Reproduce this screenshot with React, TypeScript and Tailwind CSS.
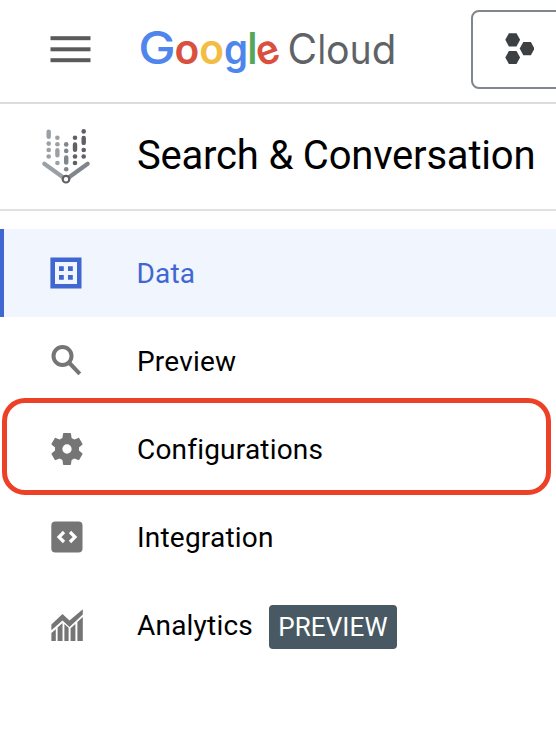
import type { ReactNode } from "react";

const GREY = "#757575";

function MenuIcon() {
  return (
    <svg width="42" height="30" viewBox="0 0 42 30" className="block shrink-0">
      <g fill="#5a5a5a">
        <rect x="0.5" y="1.2" width="40" height="4" />
        <rect x="0.5" y="12.3" width="40" height="4" />
        <rect x="0.5" y="23.2" width="40" height="4" />
      </g>
    </svg>
  );
}

type Letter = { ch: string; x: number; w: number; color: string; size: number; weight: number; transform?: string };

const letters: Letter[] = [
  { ch: "G", x: -1.8, w: 37.4, color: "#4f86ec", size: 45.5, weight: 500 },
  { ch: "o", x: 34.4, w: 24.8, color: "#d9503f", size: 41, weight: 600 },
  { ch: "o", x: 59.2, w: 24.8, color: "#f2bd42", size: 41, weight: 600 },
  { ch: "g", x: 84, w: 24, color: "#4f86ec", size: 41, weight: 600 },
  { ch: "l", x: 107.6, w: 9.8, color: "#58a55c", size: 43.5, weight: 600 },
  { ch: "e", x: 116.2, w: 23, color: "#d9503f", size: 41, weight: 600, transform: "rotate(-20 127.6 28.6)" },
  { ch: "C", x: 147.6, w: 29.6, color: "#5f6368", size: 42, weight: 400 },
  { ch: "l", x: 177.4, w: 8.6, color: "#5f6368", size: 40.5, weight: 400 },
  { ch: "o", x: 186, w: 23.6, color: "#5f6368", size: 40.5, weight: 400 },
  { ch: "u", x: 209.8, w: 21.8, color: "#5f6368", size: 40.5, weight: 400 },
  { ch: "d", x: 231.8, w: 24.6, color: "#5f6368", size: 40.5, weight: 400 },
];

function GoogleCloudLogo() {
  return (
    <svg width="260" height="56" viewBox="0 0 260 56" className="block shrink-0 overflow-visible font-['Inter',sans-serif]">
      {letters.map((l, i) => (
        <text key={i} x={l.x} y="39.9" fill={l.color} fontSize={l.size} fontWeight={l.weight} textLength={l.w} lengthAdjust="spacingAndGlyphs" transform={l.transform}>
          {l.ch}
        </text>
      ))}
    </svg>
  );
}

function ProjectIcon() {
  const hex = "-7.4,0 -3.8,-6.6 3.8,-6.6 7.4,0 3.8,6.6 -3.8,6.6";
  return (
    <svg width="30" height="33" viewBox="0 0 30 33" className="block" fill="#3c4043">
      <polygon points={hex} transform="translate(8.7 6.8)" />
      <polygon points={hex} transform="translate(23.1 15.6)" />
      <polygon points={hex} transform="translate(8.7 24.5)" />
    </svg>
  );
}

function ProductIcon() {
  return (
    <svg width="50" height="58" viewBox="0 0.8 50 58" className="block shrink-0" strokeLinecap="round" fill="none">
      <path d="M3.3 36.5 22 50" stroke="#9aa0a6" strokeWidth="4.2" />
      <path d="M46.7 36.5 28 50" stroke="#80868b" strokeWidth="4.2" />
      <g stroke="#9aa0a6" strokeWidth="4.4">
        <path d="M7.7 4.4v5.2M16.4 23v5" />
      </g>
      <g fill="#9aa0a6">
        <circle cx="7.7" cy="16.4" r="2.3" />
        <circle cx="7.7" cy="22.8" r="2.3" />
        <circle cx="7.7" cy="29.3" r="2.3" />
        <circle cx="16.4" cy="10.6" r="2.3" />
        <circle cx="16.4" cy="17" r="2.3" />
        <circle cx="16.4" cy="35.8" r="2.3" />
      </g>
      <path d="M25.2 30.2v5.2" stroke="#80868b" strokeWidth="4.4" />
      <g fill="#80868b">
        <circle cx="25.2" cy="17.2" r="2.3" />
        <circle cx="25.2" cy="23.7" r="2.3" />
        <circle cx="25.2" cy="42" r="2.3" />
      </g>
      <path d="M34 17.2v5.4M42.7 10.7v5" stroke="#5f6066" strokeWidth="4.4" />
      <g fill="#5f6066">
        <circle cx="34" cy="10.6" r="2.3" />
        <circle cx="34" cy="29.3" r="2.3" />
        <circle cx="34" cy="35.8" r="2.3" />
        <circle cx="42.7" cy="4.2" r="2.3" />
        <circle cx="42.7" cy="22.8" r="2.3" />
        <circle cx="42.7" cy="29.3" r="2.3" />
      </g>
      <circle cx="25" cy="52" r="3.3" fill="#fff" stroke="#5f6066" strokeWidth="2.2" />
    </svg>
  );
}

function DataIcon() {
  return (
    <svg width="32" height="32" viewBox="0 0 32 32" className="block" fill="#4067d1">
      <path fillRule="evenodd" d="M0.4 0.4h31.1v31.1H0.4zM5 5v22h22V5z" />
      <path d="M9 9.2h4.8v4.8H9zM18 9.2h4.8v4.8H18zM9 18h4.8v4.8H9zM18 18h4.8v4.8H18z" />
    </svg>
  );
}

function SearchIcon() {
  return (
    <svg width="32" height="32" viewBox="0 0 32 32" className="block" fill="none" stroke={GREY} strokeWidth="4">
      <circle cx="11.5" cy="11" r="9" />
      <path d="M17.5 17 28.8 28.8" />
    </svg>
  );
}

function GearIcon() {
  return (
    <svg width="32" height="32" viewBox="2.2 2 19.6 20" className="block" fill={GREY}>
      <path d="M19.43 12.98c.04-.32.07-.64.07-.98s-.03-.66-.07-.98l2.11-1.65c.19-.15.24-.42.12-.64l-2-3.46c-.12-.22-.39-.3-.61-.22l-2.49 1c-.52-.4-1.08-.73-1.69-.98l-.38-2.65C14.46 2.18 14.25 2 14 2h-4c-.25 0-.46.18-.49.42l-.38 2.65c-.61.25-1.17.59-1.69.98l-2.49-1c-.23-.09-.49 0-.61.22l-2 3.46c-.13.22-.07.49.12.64l2.11 1.65c-.04.32-.07.65-.07.98s.03.66.07.98l-2.11 1.65c-.19.15-.24.42-.12.64l2 3.46c.12.22.39.3.61.22l2.49-1c.52.4 1.08.73 1.69.98l.38 2.65c.03.24.24.42.49.42h4c.25 0 .46-.18.49-.42l.38-2.65c.61-.25 1.17-.59 1.69-.98l2.49 1c.23.09.49 0 .61-.22l2-3.46c.12-.22.07-.49-.12-.64zM12 14.9a2.9 2.9 0 1 1 0-5.8 2.9 2.9 0 0 1 0 5.8z" />
    </svg>
  );
}

function CodeIcon() {
  return (
    <svg width="32" height="32" viewBox="0 0 32 32" className="block" fill="none">
      <rect x="0.3" y="0.4" width="31.2" height="31.2" rx="4" fill={GREY} />
      <path d="M13 11 8 16l5 5M19 11 24 16l-5 5" stroke="#fff" strokeWidth="3.2" />
    </svg>
  );
}

function AnalyticsIcon() {
  return (
    <svg width="33" height="33" viewBox="0 0 33 33" className="block" fill={GREY}>
      <path d="M0.4 15.4 11.5 5 18.5 11.6 31.8 0.3V5.6L18.5 18 11.5 11.4 0.4 21.2z" />
      <path d="M0.4 24 4.8 20.2V32H0.4zM6.6 18.4 11.5 14V32H6.6zM13.4 15 17.6 18.8V32h-4.2zM19.6 19.2 24.4 14.9V32h-4.8zM26.4 12.9 31.8 8V32h-5.4z" />
    </svg>
  );
}

function NavRow({ icon, label, active, children }: { icon: ReactNode; label: string; active?: boolean; children?: ReactNode }) {
  return (
    <li className={active ? "flex h-[88px] items-center border-l-4 border-[#4067d1] bg-[#f0f5fe] pl-[46px] text-[#4067d1]" : "flex h-[88px] items-center border-l-4 border-transparent pl-[47px] text-black"}>
      <span className={active ? "w-[86.5px] shrink-0" : "w-[86px] shrink-0"}>{icon}</span>
      <span className="pt-[2px] text-[28px] leading-8 tracking-[0.2px]">{label}</span>
      {children}
    </li>
  );
}

export default function App() {
  return (
    <div className="h-[752px] w-[556px] overflow-hidden bg-white font-['Roboto',sans-serif]">
      <header className="flex h-[104px] items-start border-b-2 border-[#dadce0]">
        <div className="pt-[35px] pl-[50px]">
          <MenuIcon />
        </div>
        <div className="w-[331px] shrink-0 pt-6 pl-12">
          <GoogleCloudLogo />
        </div>
        <button className="mt-[10px] ml-12 flex h-[79px] w-[140px] shrink-0 items-center rounded-lg border-2 border-[#80868b] pl-[31px]">
          <ProjectIcon />
        </button>
      </header>
      <div className="flex h-[107px] items-center border-b-2 border-[#e0e0e0] pl-[41px]">
        <ProductIcon />
        <h1 className="ml-[46px] pb-[2px] text-[40px] leading-[48px] tracking-[-0.2px] whitespace-nowrap">Search &amp; Conversation</h1>
      </div>
      <nav className="relative pt-[18px]">
        <ul>
          <NavRow icon={<DataIcon />} label="Data" active />
          <NavRow icon={<SearchIcon />} label="Preview" />
          <NavRow icon={<GearIcon />} label="Configurations" />
          <NavRow icon={<CodeIcon />} label="Integration" />
          <NavRow icon={<AnalyticsIcon />} label="Analytics">
            <span className="mt-1 ml-4 flex h-11 w-32 items-center justify-center rounded bg-[#485963] text-[26px] tracking-[0.1px] text-white">PREVIEW</span>
          </NavRow>
        </ul>
        <div className="pointer-events-none absolute top-[187px] left-[2px] h-[97px] w-[549px] rounded-[23px] border-5 border-[#ec4127]" />
      </nav>
    </div>
  );
}
